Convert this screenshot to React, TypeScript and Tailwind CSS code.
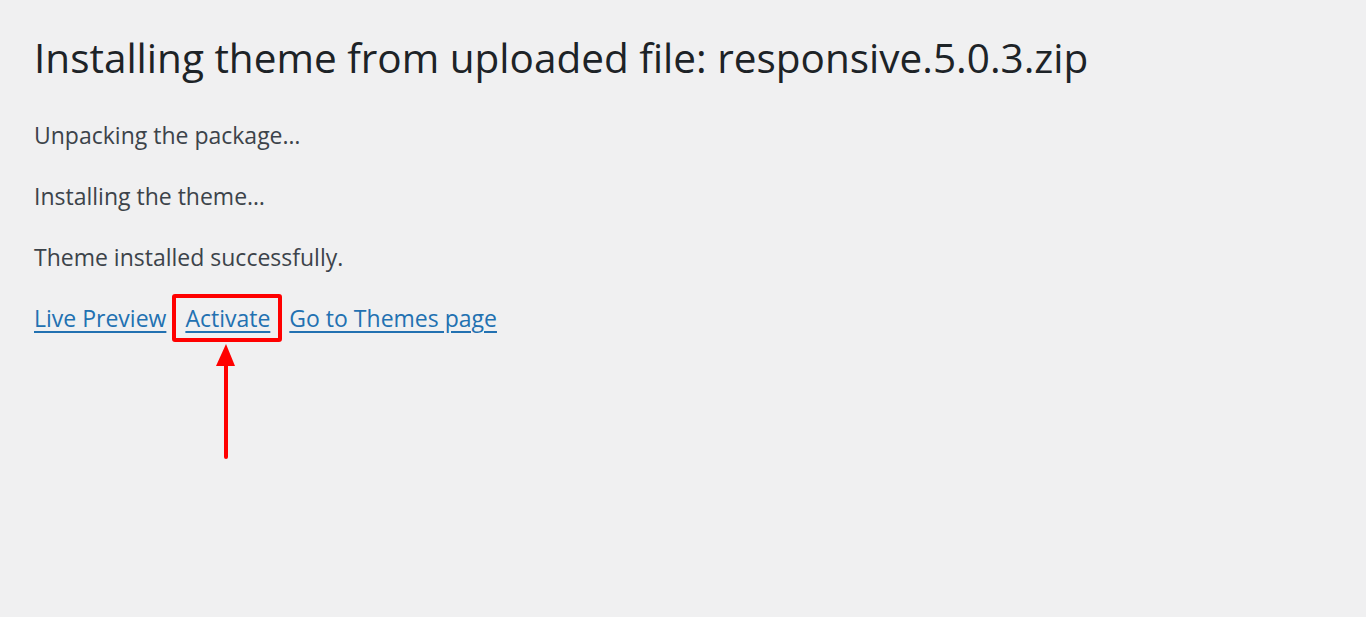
export default function App() {
  return (
    <div
      className="min-h-[617px] w-full bg-[#f0f0f1] pl-[34px] pt-[28px] text-[#3c434a]"
      style={{ fontFamily: '"Open Sans", "Noto Sans", sans-serif' }}
    >
      <h1 className="text-[40.5px] leading-[60px] font-normal text-[#1d2327]">
        Installing theme from uploaded file: responsive.5.0.3.zip
      </h1>
      <div className="mt-[29px] flex flex-col gap-[25px] text-[23px] leading-[36px]">
        <p>Unpacking the package…</p>
        <p>Installing the theme…</p>
        <p>Theme installed successfully.</p>
        <p className="flex items-center gap-[19px] text-[#2271b1]">
          <a href="#" className="underline underline-offset-[4px]">Live Preview</a>
          <span className="relative">
            <a href="#" className="underline underline-offset-[4px]">Activate</a>
            <span className="absolute -left-[13px] -right-[12px] -top-[6px] -bottom-[6px] rounded-[3px] border-[4px] border-[#ff0000]" />
            <svg
              className="absolute left-[calc(50%-2px)] top-[44px] -translate-x-1/2"
              width="22"
              height="118"
              viewBox="0 0 22 118"
            >
              <polygon points="11,0 1,22 20,22" fill="#ff0000" />
              <line x1="11" y1="20" x2="11" y2="113" stroke="#ff0000" strokeWidth="4" strokeLinecap="round" />
            </svg>
          </span>
          <a href="#" className="underline underline-offset-[4px]">Go to Themes page</a>
        </p>
      </div>
    </div>
  );
}
